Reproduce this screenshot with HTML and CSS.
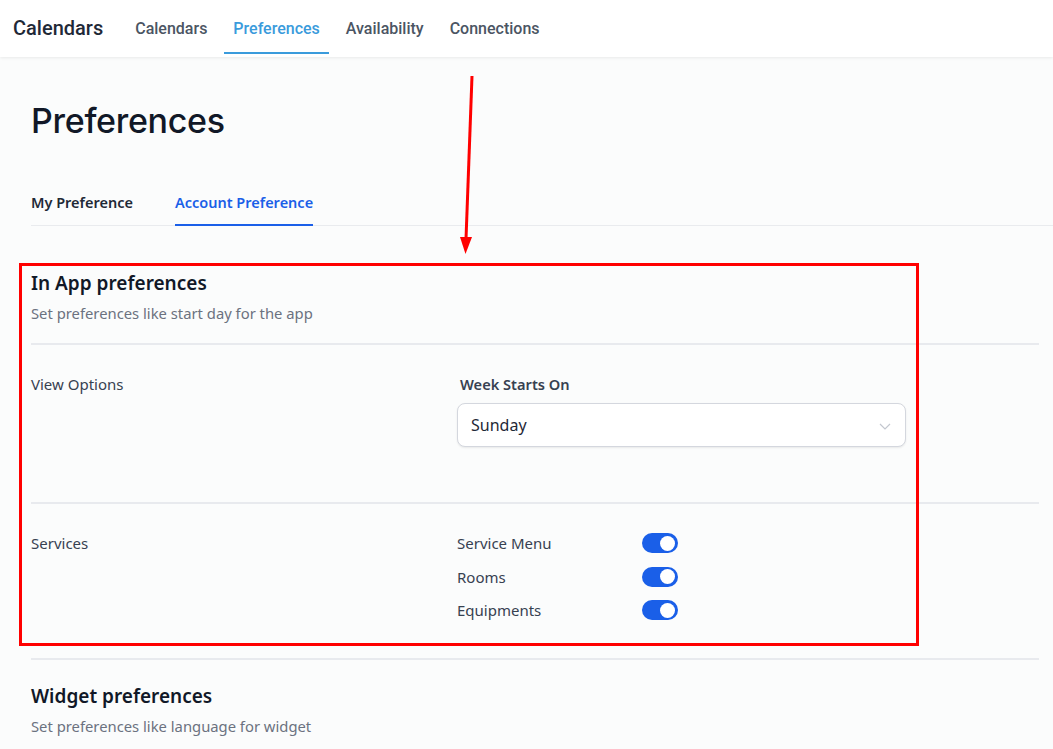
FILE: index.html
```html
<!DOCTYPE html>
<html lang="en">
<head>
    <meta charset="UTF-8">
    <title>Calendars - Preferences</title>
    <link rel="stylesheet" href="styles.css">
</head>
<body>
    <header class="topbar">
        <div class="brand">Calendars</div>
        <nav class="nav">
            <a class="nav-item">Calendars</a>
            <a class="nav-item active">Preferences</a>
            <a class="nav-item">Availability</a>
            <a class="nav-item">Connections</a>
        </nav>
    </header>

    <main class="page">
        <h1 class="page-title">Preferences</h1>

        <div class="tabs">
            <div class="tab">My Preference</div>
            <div class="tab active">Account Preference</div>
        </div>

        <section class="section">
            <h2 class="section-title">In App preferences</h2>
            <p class="section-desc">Set preferences like start day for the app</p>

            <div class="row row-view">
                <div class="row-label">View Options</div>
                <div class="row-body">
                    <label class="field-label">Week Starts On</label>
                    <div class="select">
                        <span>Sunday</span>
                        <svg class="chevron" width="12" height="7" viewBox="0 0 12 7">
                            <path d="M1 1l5 5 5-5" fill="none" stroke="#c3c7cf" stroke-width="1.2"/>
                        </svg>
                    </div>
                </div>
            </div>

            <div class="row row-services">
                <div class="row-label">Services</div>
                <div class="row-body toggles">
                    <div class="toggle-row">
                        <span class="toggle-label">Service Menu</span>
                        <span class="toggle on"><span class="knob"></span></span>
                    </div>
                    <div class="toggle-row">
                        <span class="toggle-label">Rooms</span>
                        <span class="toggle on"><span class="knob"></span></span>
                    </div>
                    <div class="toggle-row">
                        <span class="toggle-label">Equipments</span>
                        <span class="toggle on"><span class="knob"></span></span>
                    </div>
                </div>
            </div>
        </section>

        <section class="section section-widget">
            <h2 class="section-title">Widget preferences</h2>
            <p class="section-desc">Set preferences like language for widget</p>
        </section>

        <!-- annotation overlay -->
        <div class="mark-box"></div>
        <svg class="mark-arrow" width="30" height="190" viewBox="0 0 30 190">
            <line x1="21" y1="2" x2="15" y2="165" stroke="#ff0000" stroke-width="3"/>
            <polygon points="9,163 21,163 14.5,180" fill="#ff0000"/>
        </svg>
    </main>
</body>
</html>
```

FILE: styles.css
```css
body {
    margin: 0;
    background: #fbfcfc;
    font-family: "Noto Sans", "Open Sans", sans-serif;
    color: #1f2937;
}

/* top navigation */
.topbar {
    display: flex;
    align-items: stretch;
    height: 57px;
    padding-left: 13px;
    background: #fff;
    box-shadow: 0 1px 3px rgba(0, 0, 0, 0.08);
    position: relative;
    z-index: 1;
}

.brand {
    align-self: center;
    font-family: Roboto, sans-serif;
    font-size: 20px;
    font-weight: 500;
    color: #1f2937;
    margin-right: 23px;
    padding-bottom: 2px;
}

.nav {
    display: flex;
    gap: 8px;
}

.nav-item {
    display: flex;
    align-items: center;
    padding: 4px 9px 0;
    font-family: Roboto, sans-serif;
    font-size: 16px;
    font-weight: 500;
    color: #4b5563;
    border-bottom: 2px solid transparent;
    margin-bottom: 3px;
}

.nav-item.active {
    color: #3a9bdc;
    border-bottom-color: #3a9bdc;
}

/* page */
.page {
    position: relative;
    padding: 43px 14px 0 31px;
}

.page-title {
    margin: 0;
    font-family: Inter, "Noto Sans", sans-serif;
    font-size: 34px;
    line-height: 42px;
    font-weight: 500;
    color: #111827;
    letter-spacing: -0.3px;
}

.tabs {
    display: flex;
    gap: 42px;
    margin: 50px -14px 0 0;
    border-bottom: 1px solid #e9ebee;
}

.tab {
    font-size: 14.5px;
    line-height: 20px;
    font-weight: 600;
    color: #1f2937;
    padding-bottom: 12px;
    border-bottom: 2px solid transparent;
    margin-bottom: -1px;
}

.tab.active {
    color: #1a5fe8;
    border-bottom-color: #1a5fe8;
}

/* sections */
.section {
    padding-top: 44px;
}

.section-title {
    margin: 0;
    font-size: 19px;
    line-height: 26px;
    font-weight: 600;
    color: #111827;
}

.section-desc {
    margin: 6px 0 0;
    font-size: 14.8px;
    line-height: 22px;
    color: #6b7280;
}

.row {
    display: grid;
    grid-template-columns: 426px 449px;
    margin-top: 19px;
    border-top: 2px solid #e8eaee;
    padding-top: 28px;
}

.row + .row {
    margin-top: 0;
}

.row-view {
    padding-bottom: 55px;
}

.row-services {
    padding-bottom: 37px;
    border-bottom: 2px solid #e8eaee;
}

.row-label {
    font-size: 15px;
    line-height: 22px;
    color: #374151;
}

.field-label {
    display: block;
    padding-left: 3px;
    font-size: 14.6px;
    line-height: 22px;
    font-weight: 600;
    color: #374151;
}

.select {
    display: flex;
    align-items: center;
    justify-content: space-between;
    height: 42px;
    margin-top: 8px;
    padding: 0 14px 0 13px;
    background: #fff;
    border: 1px solid #d4d7de;
    border-radius: 8px;
    box-shadow: 0 1px 2px rgba(0, 0, 0, 0.08);
    font-size: 16px;
    color: #1f2937;
}

.chevron {
    margin-top: 3px;
}

.toggles {
    display: flex;
    flex-direction: column;
    gap: 11.5px;
}

.toggle-row {
    display: flex;
    align-items: center;
    height: 22px;
}

.toggle-label {
    width: 185px;
    font-size: 15px;
    color: #374151;
}

.toggle {
    display: flex;
    align-items: center;
    justify-content: flex-end;
    width: 36px;
    height: 20px;
    padding: 0 3px;
    box-sizing: border-box;
    border-radius: 10px;
    background: #d1d5db;
}

.toggle.on {
    background: #1a5fe8;
}

.knob {
    width: 15px;
    height: 15px;
    border-radius: 50%;
    background: #fff;
}

.section-widget {
    padding-top: 23px;
}

/* red annotation */
.mark-box {
    position: absolute;
    left: 19px;
    top: 206px;
    width: 894px;
    height: 377px;
    border: 3px solid #ff0000;
}

.mark-arrow {
    position: absolute;
    left: 451px;
    top: 17px;
}
```
